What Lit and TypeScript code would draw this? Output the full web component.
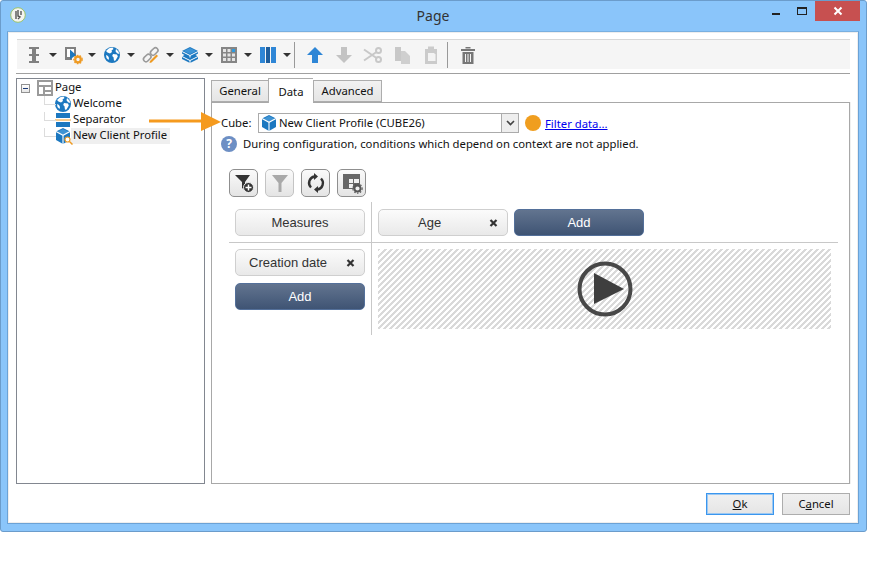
import { LitElement, html, css } from "lit";
import { customElement } from "lit/decorators.js";

const globe = (s = 16) => html`<svg width=${s} height=${s} viewBox="0 0 16 16"><circle cx="8" cy="8" r="8" fill="#1c78c0"/><path d="M5 1.200 8.500 .6 9.500 2 7.500 3.500 8 5 6 6.500 3.500 5.500 2 4zM9 7l4 .5 .8 2-2.300 4-1.500.3-.5-3.500L8.200 9zM12 2l2.500 2.500.8 2.500-2.300-.8-1.500-2zM2 8l2 1 1 2-.5 2L2.500 11z" fill="#fff"/></svg>`;
const cube = (s = 16) => html`<svg width=${s} height=${s} viewBox="0 0 16 16"><path d="M8 0 15 3.500V12L8 16 1 12V3.500z" fill="#1c78c0"/><path d="M8 1 14 4 8 7 2 4z" fill="#3f93d3"/><path d="M1 3.500 8 7.300 15 3.500M8 7.300V16" fill="none" stroke="#fff" stroke-width="1.100"/></svg>`;
const xmark = html`<svg class="x" width="9" height="9" viewBox="0 0 9 9"><path d="M1.500 1.500 7.500 7.500M7.500 1.500 1.500 7.500" stroke="#333" stroke-width="2.200"/></svg>`;
const I: Record<string, any> = {
  cursor: html`<svg width="20" height="20" viewBox="0 0 20 20"><path d="M5 2h10v2h-3v5h3v2h-3v5h3v2H5v-2h3v-5H5V9h3V4H5z" fill="#808080"/></svg>`,
  play: html`<svg width="20" height="20" viewBox="0 0 20 20"><path d="M2 2h11v9H9v4H2z" fill="#808080"/><path d="M4 4h7v5H8l-1 3H4z" fill="#fff"/><path d="M7 4.500 13 10 7 14.500z" fill="#1c78c0"/><circle cx="15" cy="14.500" r="2.800" fill="none" stroke="#ee9a22" stroke-width="2.200"/><circle cx="15" cy="14.500" r="4.200" fill="none" stroke="#ee9a22" stroke-width="1.200" stroke-dasharray="1.600 1.400"/></svg>`,
  globe: html`<span class="g20">${globe(16)}</span>`,
  link: html`<svg width="20" height="20" viewBox="0 0 20 20"><g fill="none" stroke="#9a9a9a" stroke-width="1.600"><rect x="2" y="10.500" width="8.500" height="5" rx="2.500" transform="rotate(-45 6.200 13)"/><rect x="9" y="4" width="8.500" height="5" rx="2.500" transform="rotate(-45 13.200 6.500)"/></g><path d="M9 16 15.500 9.500l1.500 1.500-6.500 6.500-2 .5z" fill="#ee9a22"/></svg>`,
  stack: html`<svg width="20" height="20" viewBox="0 0 20 20"><path d="M10 2 18 6v2.500L15.500 10 18 11.500V14l-8 4-8-4v-2.500L4.500 10 2 8.500V6z" fill="#1c78c0"/><path d="M10 3 16.500 6 10 9 3.500 6z" fill="#3d94d6"/><path d="M2 6.500 10 10.500 18 6.500M2 11.500 10 15.500 18 11.500M10 10.500v2M10 15.500v2.500" stroke="#fff" stroke-width="1" fill="none"/></svg>`,
  grid: html`<svg width="20" height="20" viewBox="0 0 20 20"><rect x="2" y="2" width="16" height="16" fill="#858585"/><g fill="#e4e4e4"><rect x="4" y="4" width="3" height="3"/><rect x="8.500" y="4" width="3" height="3"/><rect x="4" y="8.500" width="3" height="3"/><rect x="8.500" y="8.500" width="3" height="3"/><rect x="13" y="8.500" width="3" height="3"/><rect x="4" y="13" width="3" height="3"/><rect x="8.500" y="13" width="3" height="3"/><rect x="13" y="13" width="3" height="3"/></g><rect x="13" y="4" width="3" height="3" fill="#2d9be0"/></svg>`,
  cols: html`<svg width="20" height="20" viewBox="0 0 20 20"><path d="M2 2h5v16H2zM13 2h5v16h-5z" fill="#2e86d6"/><path d="M8 2h4v16H8z" fill="#1f5f9e"/></svg>`,
  up: html`<svg width="20" height="20" viewBox="0 0 20 20"><path d="M10 2 18 10h-5v8H7v-8H2z" fill="#2e86d6"/></svg>`,
  down: html`<svg width="20" height="20" viewBox="0 0 20 20"><path d="M10 18 2 10h5V2h6v8h5z" fill="#c3c3c3"/></svg>`,
  cut: html`<svg width="20" height="20" viewBox="0 0 20 20"><g fill="none" stroke="#c8c8c8" stroke-width="2"><circle cx="15.500" cy="5.500" r="2.500"/><circle cx="15.500" cy="14.500" r="2.500"/><path d="M1 4.500 13.500 13M1 15.500 13.500 7"/></g></svg>`,
  copy: html`<svg width="20" height="20" viewBox="0 0 20 20"><path d="M3 2h6v14H3z" fill="#c8c8c8"/><path d="M9 6h4l5 5v8H9z" fill="#cfcfcf"/></svg>`,
  paste: html`<svg width="20" height="20" viewBox="0 0 20 20"><path d="M4 4h3V1.500h6V4h3v15H4z" fill="#cbcbcb"/><path d="M7 8h6l1.500 1.500V16H7z" fill="#f3f3f3"/></svg>`,
  trash: html`<svg width="20" height="20" viewBox="0 0 20 20"><path d="M3 4h14v2H3zM7.500 2h5v1.500h-5zM4.500 7h11v12h-11z" fill="#777"/><path d="M7.500 9v8M10 9v8M12.500 9v8" stroke="#f5f5f5" stroke-width="1"/></svg>`,
};
const caret = html`<span class="caret"></span>`;

@customElement("app-root")
export class AppRoot extends LitElement {
  static styles = css`
    :host { display: block; width: 894px; height: 561px; background: #fff; font-family: "Noto Sans", sans-serif; font-size: 11.300px; color: #111; }
    * { box-sizing: border-box; }
    .window { position: relative; width: 867px; height: 532px; background: #8ac5fa; border: 1px solid #6b9ccb; border-radius: 3px; padding: 0 7px 7px 6px; display: flex; flex-direction: column; }
    .titlebar { height: 30px; display: flex; align-items: center; position: relative; justify-content: center; font-size: 14px; color: #333; flex: none; padding-bottom: 2px; }
    .logo { position: absolute; left: 3px; top: 6px; }
    .wbtns { position: absolute; right: -1px; top: 0; display: flex; align-items: flex-start; }
    .min { width: 27px; height: 20px; display: flex; justify-content: center; }
    .min i { display: block; width: 8px; height: 2px; background: #222; margin-top: 12px; }
    .max { width: 26px; height: 20px; display: flex; justify-content: center; }
    .max i { display: block; width: 10px; height: 8px; margin-top: 6px; border: 1px solid #222; border-top-width: 2px; }
    .close { width: 45px; height: 20px; background: #c75050; display: flex; align-items: center; justify-content: center; }
    .body { flex: 1; background: #fff; border: 1px solid #6ba2d6; border-top-color: #7ab0e0; box-shadow: inset 1px 1px 0 #eee, inset -1px -1px 0 #eee; padding: 7px 8px 0 8px; display: flex; flex-direction: column; }
    .toolbar { margin-left: 1px; height: 30px; background: #f5f5f5; border-top: 1px solid #d8d8d8; display: flex; align-items: center; padding-left: 7px; flex: none; }
    .group { display: flex; width: 36px; margin-right: 3px; align-items: center; flex: none; }
    .group.last { margin-right: 0; }
    .group svg { display: block; }
    .g20 { width: 20px; height: 20px; display: flex; align-items: center; justify-content: center; }
    .caret { width: 0; height: 0; border-left: 4px solid transparent; border-right: 4px solid transparent; border-top: 4px solid #333; margin-left: 5px; }
    .sep { width: 1px; height: 26px; background: #999; flex: none; }
    .ic { width: 20px; height: 20px; flex: none; margin-left: 9px; }
    .ic svg { display: block; }
    .ic.first { margin-left: 10px; }
    .sep.s2 { margin-left: 6px; }
    .rule { height: 1px; background: #a0a0a0; margin-top: 4px; flex: none; }
    .main { display: flex; gap: 6px; margin-top: 4px; height: 406px; flex: none; }
    .tree { width: 189px; border: 1px solid #828790; padding-top: 1px; flex: none; }
    .row { height: 16px; display: flex; align-items: center; position: relative; line-height: 14px; white-space: nowrap; }
    .row svg { display: block; flex: none; }
    .row span.label, .rootlabel { padding-bottom: 1px; height: 16px; line-height: 14px; }
    .expander { width: 9px; height: 9px; border: 1px solid #919191; margin: 0 7px 0 4px; display: flex; align-items: center; justify-content: center; flex: none; background: linear-gradient(#fff, #e6e6e6); }
    .expander i { width: 5px; height: 1px; background: #1e3c78; display: block; }
    .rootlabel { margin-left: 2px; }
    .child { padding-left: 38px; }
    .child::before { content: ""; position: absolute; left: 27px; top: 0; width: 11px; height: 8px; border-left: 1px solid #dcdcdc; border-bottom: 1px solid #dcdcdc; }
    .child .label { margin-left: 2px; }
    .child.sel .label { background: #efefef; margin-left: 0; padding: 0 2px; width: 99px; }
    .cubewrap { position: relative; width: 16px; height: 16px; flex: none; }
    .mag { position: absolute; right: -2px; bottom: -1px; }
    .right { flex: 1; display: flex; flex-direction: column; min-width: 0; }
    .tabs { display: flex; height: 24px; align-items: flex-end; flex: none; position: relative; z-index: 1; }
    .tab { height: 22px; border: 1px solid #adadad; border-bottom: 1px solid #adadad; background: linear-gradient(#f2f2f2, #e5e5e5); display: flex; align-items: center; justify-content: center; padding-bottom: 2px; }
    .tab.t1 { width: 57px; border-right: 0; }
    .tab.t2 { width: 45px; height: 25px; margin-bottom: -1px; background: #fff; border-bottom: 0; border-right: 0; padding-bottom: 0; }
    .tab.t3 { width: 69px; }
    .pane { flex: 1; border: 1px solid #a8a8a8; padding: 10px 0 0 9px; box-shadow: 1px 0 0 #f0f0f0; }
    .cuberow { display: flex; align-items: center; height: 20px; }
    .cubelabel { width: 37px; flex: none; padding-bottom: 2px; }
    .combo { width: 261px; height: 20px; border: 1px solid #ababab; display: flex; align-items: center; padding-left: 2px; gap: 2px; flex: none; }
    .combo svg { display: block; }
    .ctext { flex: 1; padding-bottom: 2px; }
    .cbtn { width: 17px; height: 18px; border-left: 1px solid #ababab; background: #eee; display: flex; align-items: center; justify-content: center; flex: none; }
    .dot { width: 16px; height: 16px; border-radius: 50%; background: #f09e1f; margin-left: 6px; flex: none; }
    a { color: #00e; text-decoration: underline; margin-left: 4px; }
    .inforow { display: flex; align-items: center; gap: 6px; margin-top: 3px; height: 16px; }
    .itext { padding-bottom: 2px; }
    .q { width: 16px; height: 16px; border-radius: 50%; background: #6d8fc4; color: #fff; font-weight: 700; font-size: 12px; line-height: 16px; text-align: center; flex: none; }
    .fbtns { display: flex; gap: 7px; margin: 17px 0 0 8px; }
    .fbtn { width: 29px; height: 28px; border: 1px solid #8f8f8f; border-radius: 5px; background: linear-gradient(#fafafa, #e4e4e4); display: flex; align-items: center; justify-content: center; }
    .fbtn.off { border-color: #c4c4c4; }
    .fbtn svg { display: block; }
    .pivot { display: grid; grid-template-columns: 143px 466px; grid-template-rows: 41px 92px; margin: 5px 0 0 8px; width: 609px; font-family: "Liberation Sans", Arial, sans-serif; font-size: 13px; }
    .cell { padding-left: 6px; display: flex; flex-direction: column; gap: 6px; }
    .c1 { padding-top: 7px; border-right: 1px solid #c8c8c8; border-bottom: 1px solid #c8c8c8; }
    .c2 { padding-top: 7px; flex-direction: row; border-bottom: 1px solid #c8c8c8; }
    .c3 { padding-top: 6px; gap: 7px; border-right: 1px solid #c8c8c8; }
    .c4 { padding-top: 6px; }
    .btn { width: 130px; height: 27px; border: 1px solid #cfcfcf; border-radius: 5px; background: linear-gradient(#fbfbfb, #e9e9e9); color: #333; display: flex; align-items: center; justify-content: center; position: relative; flex: none; }
    .btn.left { justify-content: flex-start; padding-left: 13px; }
    .btn.age { justify-content: flex-start; padding-left: 39px; }
    .btn .x { position: absolute; right: 9px; top: 50%; transform: translateY(-50%); display: block; }
    .btn.add { background: linear-gradient(#62748f, #3f5474); border-color: #54709a; color: #fff; }
    .hatch { width: 453px; height: 80px; background: repeating-linear-gradient(135deg, #d9d9d9 0 2.121px, #fff 2.121px 4.243px); display: flex; align-items: center; justify-content: center; }
    .hatch svg { display: block; }
    .footer { display: flex; justify-content: flex-end; gap: 8px; margin-top: 9px; flex: none; }
    .dbtn { width: 68px; height: 22px; border: 1px solid #adadad; background: linear-gradient(#f0f0f0, #e5e5e5); display: flex; align-items: center; justify-content: center; padding-bottom: 2px; }
    .dbtn.def { border: 1px solid #3a96ee; box-shadow: inset 0 0 0 1px #9cc8f2; }
    u { text-decoration: underline; }
    .arrow { position: absolute; left: 148px; top: 110px; display: block; }
  `;

  render() {
    return html`
      <div class="window">
        <div class="titlebar">
          <svg class="logo" width="16" height="16" viewBox="0 0 16 16"><circle cx="8" cy="8" r="7.300" fill="#f4f4f0" stroke="#9cc46a"/><path d="M6 4v8M8 3v6l2 1-2 2M11 4v4" fill="none" stroke="#555" stroke-width="1.400"/></svg>
          Page
          <div class="wbtns">
            <div class="min"><i></i></div>
            <div class="max"><i></i></div>
            <div class="close"><svg width="10" height="10" viewBox="0 0 10 10"><path d="M1.500 1.500 8.500 8.500M8.500 1.500 1.500 8.500" stroke="#fff" stroke-width="2"/></svg></div>
          </div>
        </div>
        <div class="body">
          <div class="toolbar">
            <div class="group">${I.cursor}${caret}</div>
            <div class="group">${I.play}${caret}</div>
            <div class="group">${I.globe}${caret}</div>
            <div class="group">${I.link}${caret}</div>
            <div class="group">${I.stack}${caret}</div>
            <div class="group">${I.grid}${caret}</div>
            <div class="group last">${I.cols}${caret}</div>
            <div class="sep"></div>
            <div class="ic first">${I.up}</div>
            <div class="ic">${I.down}</div>
            <div class="ic">${I.cut}</div>
            <div class="ic">${I.copy}</div>
            <div class="ic">${I.paste}</div>
            <div class="sep s2"></div>
            <div class="ic first">${I.trash}</div>
          </div>
          <div class="rule"></div>
          <div class="main">
            <div class="tree">
              <div class="row">
                <span class="expander"><i></i></span>
                <svg width="16" height="16" viewBox="0 0 16 16"><rect width="16" height="16" fill="#9a9a9a"/><path d="M2 2h12v3H2zM2 7h4v7H2zM8 7h6v3H8zM8 12h6v2H8z" fill="#fff"/></svg>
                <span class="rootlabel">Page</span>
              </div>
              <div class="row child">${globe()}<span class="label">Welcome</span></div>
              <div class="row child">
                <svg width="16" height="16" viewBox="0 0 16 16"><path d="M1 1h14v5H1zM1 10h14v5H1z" fill="#1c78c0"/><path d="M0 8h16" stroke="#ee9a22" stroke-width="1"/></svg>
                <span class="label">Separator</span>
              </div>
              <div class="row child sel">
                <span class="cubewrap">${cube()}<svg class="mag" width="9" height="9" viewBox="0 0 9 9"><circle cx="3.500" cy="3.500" r="2.500" fill="#fff" stroke="#ee9a22" stroke-width="1.200"/><path d="M5.500 5.500 8.500 8.500" stroke="#ee9a22" stroke-width="1.500"/></svg></span>
                <span class="label">New Client Profile</span>
              </div>
            </div>
            <div class="right">
              <div class="tabs">
                <div class="tab t1">General</div>
                <div class="tab t2">Data</div>
                <div class="tab t3">Advanced</div>
              </div>
              <div class="pane">
                <div class="cuberow">
                  <span class="cubelabel">Cube:</span>
                  <div class="combo">
                    ${cube()}
                    <span class="ctext">New Client Profile (CUBE26)</span>
                    <span class="cbtn"><svg width="9" height="6" viewBox="0 0 9 6"><path d="M1 1 4.500 4.500 8 1" fill="none" stroke="#444" stroke-width="1.600"/></svg></span>
                  </div>
                  <span class="dot"></span>
                  <a>Filter data...</a>
                </div>
                <div class="inforow"><span class="q">?</span><span class="itext">During configuration, conditions which depend on context are not applied.</span></div>
                <div class="fbtns">
                  <div class="fbtn"><svg width="22" height="22" viewBox="0 0 22 22"><path d="M2 3h15l-5 7v8l-3-2v-6z" fill="#333"/><circle cx="15.500" cy="15.500" r="5" fill="#333" stroke="#eee"/><path d="M15.500 12.500v6M12.500 15.500h6" stroke="#fff" stroke-width="1.500"/></svg></div>
                  <div class="fbtn off"><svg width="22" height="22" viewBox="0 0 22 22"><path d="M3 3h16l-6.500 8v9h-3v-9z" fill="#a9a9a9"/></svg></div>
                  <div class="fbtn"><svg width="20" height="20" viewBox="0 0 20 20"><g fill="none" stroke="#333" stroke-width="2.400"><path d="M5 14.500A6.500 6.500 0 0 1 8.500 3.500"/><path d="M15 5.500A6.500 6.500 0 0 1 11.500 16.500"/></g><path d="M8 0v7l4-3.500zM12 20v-7l-4 3.500z" fill="#333"/></svg></div>
                  <div class="fbtn"><svg width="22" height="22" viewBox="0 0 22 22"><rect x="2" y="2" width="17" height="15" fill="#666"/><path d="M8 7h4v4H8zM13 7h5v4h-5zM8 12h4v4H8z" fill="#f0f0f0"/><circle cx="16.500" cy="16.500" r="3" fill="#eee" stroke="#555" stroke-width="1.800"/><circle cx="16.500" cy="16.500" r="4.600" fill="none" stroke="#555" stroke-width="1.200" stroke-dasharray="1.500 1.500"/></svg></div>
                </div>
                <div class="pivot">
                  <div class="cell c1"><div class="btn">Measures</div></div>
                  <div class="cell c2">
                    <div class="btn age">Age${xmark}</div>
                    <div class="btn add">Add</div>
                  </div>
                  <div class="cell c3">
                    <div class="btn left">Creation date${xmark}</div>
                    <div class="btn add">Add</div>
                  </div>
                  <div class="cell c4">
                    <div class="hatch"><svg width="56" height="56" viewBox="0 0 56 56"><circle cx="28" cy="28" r="25.500" fill="none" stroke="#484848" stroke-width="4"/><path d="M17 12 47 28 17 43z" fill="#3f3f3f"/></svg></div>
                  </div>
                </div>
              </div>
            </div>
          </div>
          <div class="footer">
            <div class="dbtn def"><span><u>O</u>k</span></div>
            <div class="dbtn"><span>C<u>a</u>ncel</span></div>
          </div>
        </div>
        <svg class="arrow" width="74" height="22" viewBox="0 0 74 22"><path d="M0 10h52" stroke="#f59a1e" stroke-width="3"/><path d="M52 1 72 11 52 20z" fill="#f59a1e"/></svg>
      </div>
    `;
  }
}
